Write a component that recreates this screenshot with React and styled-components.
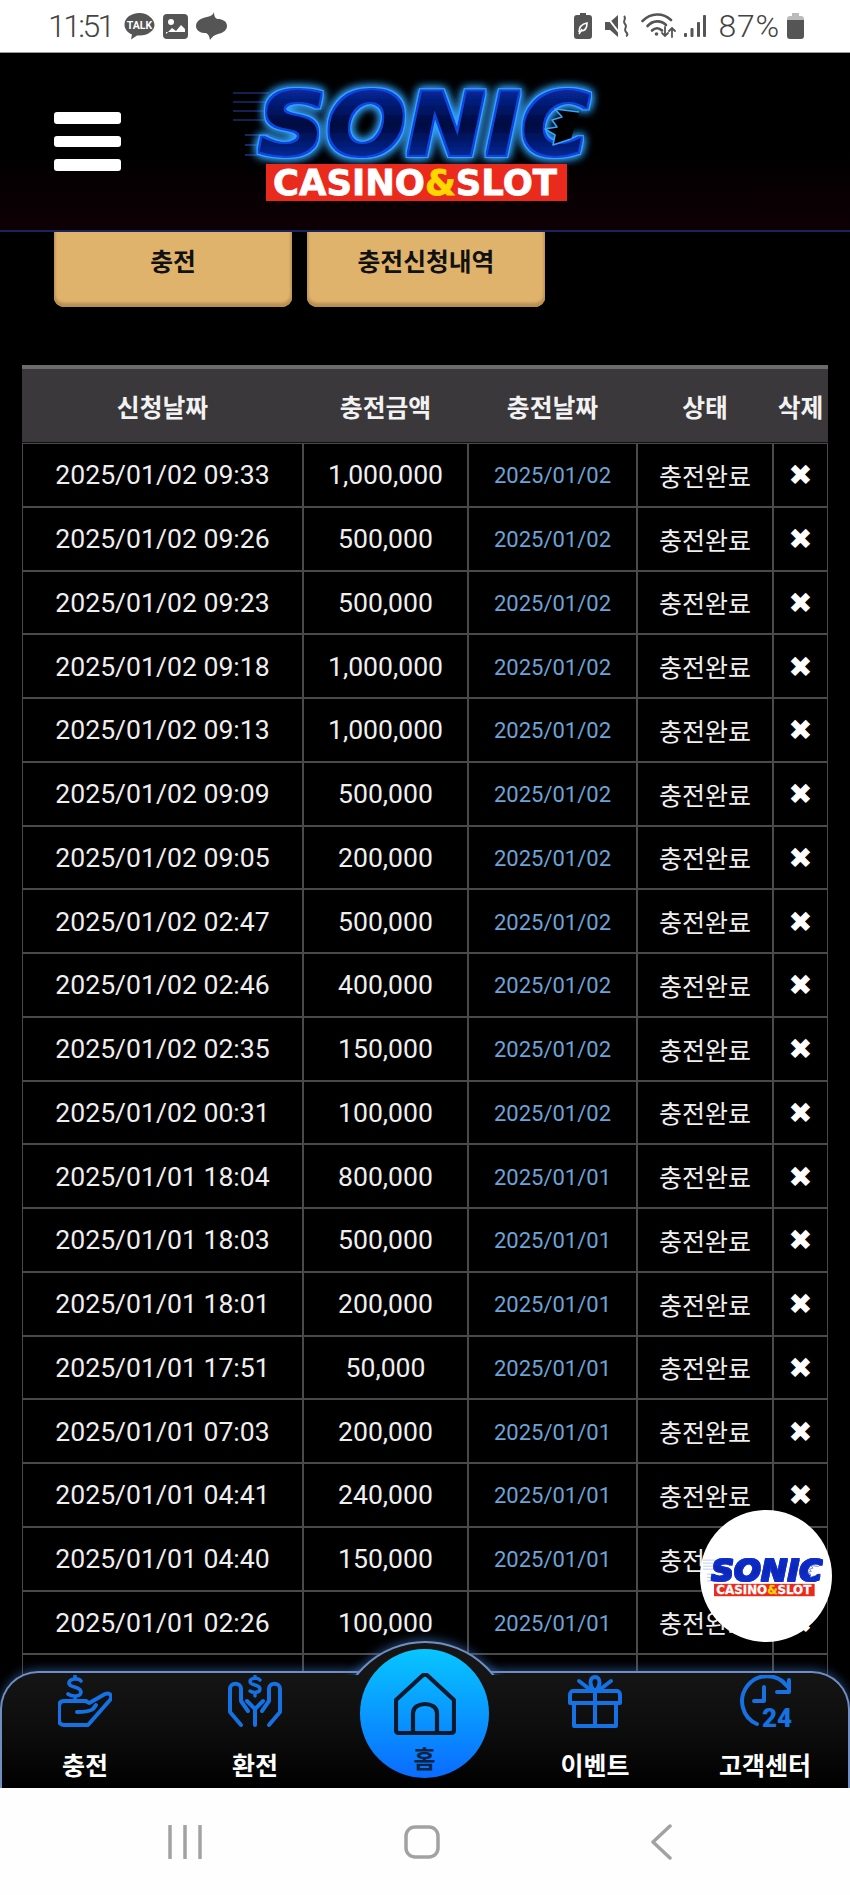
import React from 'react';
import styled, { createGlobalStyle } from 'styled-components';

const Global = createGlobalStyle`
  html, body { margin: 0; padding: 0; background: #000; }
  * { box-sizing: border-box; }
`;

const KR = `Roboto, "Noto Sans CJK KR", sans-serif`;

const Screen = styled.div`
  width: 850px; height: 1895px; display: flex; flex-direction: column;
  overflow: hidden; background: #000; font-family: ${KR};
`;

/* status bar */
const StatusBar = styled.div`
  height: 53px; flex: none; background: #fff; display: flex; align-items: center;
  justify-content: space-between; padding: 0 46px 0 48px;
  border-bottom: 1px solid #999;
`;
const StatusGroup = styled.div`
  display: flex; align-items: center; gap: ${p => p.$gap ?? 8}px;
`;
const StatusText = styled.span`
  font-family: Roboto, sans-serif; font-size: 32px; font-weight: 300; line-height: 1; color: #444;
  letter-spacing: ${p => p.$track}px;
  margin: 0 ${p => p.$after || 0}px 0 ${p => p.$before || 0}px;
`;
const StatusIcon = styled.svg`
  display: block; flex: none; margin-left: ${p => p.$before || 0}px;
`;

/* app */
const AppArea = styled.div`
  position: relative; flex: 1; min-height: 0; overflow: hidden; background: #000;
  display: flex; flex-direction: column;
`;
const Header = styled.header`
  flex: none; height: 179px; display: flex; align-items: flex-start;
  background: linear-gradient(#000 55%, #0e0005);
  border-bottom: 2px solid #17265c; position: relative; z-index: 2;
`;
const Burger = styled.div`
  margin: 59px 0 0 54px; width: 67px; display: flex; flex-direction: column; gap: 12px;
`;
const BurgerBar = styled.span`
  display: block; height: 11.5px; background: #fff; border-radius: 3px;
`;
const HeaderLogo = styled.div`
  margin: 34px 0 0 124px; width: 362px; height: 128px;
`;
const Actions = styled.div`
  flex: none; display: flex; gap: 15px; padding-left: 54px; margin-top: -2px;
`;
const ActionButton = styled.button`
  width: 238px; height: 77px; padding: 0 0 18px; border: 0; border-radius: 0 0 10px 10px;
  background: #e0b36d; color: #111; font: 700 24.8px ${KR};
  box-shadow: inset 0 -4px 3px #b98f4f, inset -2px 0 2px #c9a060, inset 2px 0 2px #c9a060;
`;

/* table */
const TableWrap = styled.div`
  flex: none; margin: 58px 0 0 22px; width: 806px;
`;
const Table = styled.table`
  width: 806px; table-layout: fixed; border-collapse: separate; border-spacing: 0;
`;
const Col = styled.col`
  width: ${p => p.$w}px;
`;
const HeadCell = styled.th`
  height: 78px; padding: 0; background: #3a383b; border-top: 4px solid #6b6b6b;
  border-bottom: 1px solid #111; color: #f2f2f2; font: 700 24.8px ${KR}; text-align: center;
`;
const Cell = styled.td`
  height: 63.75px; padding: ${p => p.$nudge || 0}px 0 0; border: 1.25px solid #4a4a4a; text-align: center;
  background: #000; white-space: nowrap; font: 400 ${p => p.$size || 26.6}px ${KR};
  color: ${p => p.$color || '#efefef'};
`;
const DeleteMark = styled.span`
  font-family: "DejaVu Sans", sans-serif; font-size: 29px; line-height: 1; color: #fff;
`;

/* floating badge */
const FloatBadge = styled.div`
  position: absolute; left: 700px; top: 1457px; width: 132px; height: 132px; border-radius: 50%;
  background: #fff; z-index: 3; padding: 48px 0 0 7px;
`;
const BadgeLogo = styled.div`
  width: 121px; height: 43px;
`;

/* bottom nav */
const BottomNav = styled.nav`
  position: absolute; left: 0; right: 0; bottom: 0; height: 117px; z-index: 4;
  display: grid; grid-template-columns: repeat(5, 170px); justify-content: center;
  background: linear-gradient(#151515, #0c0c0c 55%, #000);
  border: 2px solid #6f8fc4; border-bottom: 0; border-radius: 38px 38px 0 0;
  box-shadow: 0 -2px 10px rgba(70, 130, 220, .45);
`;
const BumpClip = styled.div`
  position: absolute; left: 50%; top: -52px; width: 240px; height: 54px; margin-left: -120px; overflow: hidden;
`;
const BumpArc = styled.div`
  position: absolute; left: 32px; top: 20px; width: 176px; height: 176px; border-radius: 50%;
  background: #151515; border: 2px solid #6f8fc4;
  box-shadow: 0 -2px 10px rgba(70, 130, 220, .5);
`;
const NavItem = styled.div`
  position: relative; display: flex; flex-direction: column; align-items: center; padding-top: 2px;
`;
const NavIcon = styled.svg`
  width: 54px; height: 54px; display: block; fill: none; stroke: #1671e3; stroke-width: 4;
  stroke-linecap: round; stroke-linejoin: round;
`;
const NavLabel = styled.span`
  margin-top: 22px; color: #fff; font: 700 25px/32px ${KR}; white-space: nowrap;
`;
const HomeButton = styled.div`
  position: absolute; left: 20px; top: -24px; width: 129px; height: 129px; border-radius: 50%;
  background: linear-gradient(#08c6ff, #0a6bff);
  display: flex; flex-direction: column; align-items: center; padding-top: 24px;
`;
const HomeIcon = styled.svg`
  width: 62px; height: 62px; display: block; fill: none; stroke: #0b1a2c; stroke-width: 4.2;
  stroke-linecap: round; stroke-linejoin: round;
`;
const HomeLabel = styled.span`
  margin-top: 13px; font: 700 24px/24px ${KR}; color: #0b2444;
`;

/* android nav */
const SystemNav = styled.div`
  flex: none; height: 107px; background: #fefefe; display: grid;
  grid-template-columns: 369px 106px 372px; align-items: center;
`;
const SystemSlot = styled.div`
  display: flex; justify-content: center;
`;
const SystemSvg = styled.svg`
  display: block; fill: none; stroke: #a2a2a2; stroke-width: 3.5; stroke-linecap: round; stroke-linejoin: round;
`;

/* logo */
const LogoSvg = styled.svg`
  display: block; width: 100%; height: 100%; overflow: visible;
`;
const SonicWord = styled.text`
  font: italic 700 88px "DejaVu Sans", sans-serif;
`;
const BannerWord = styled.text`
  font: 700 35.5px "DejaVu Sans", sans-serif; fill: #fff; stroke: #fff; stroke-width: .8px;
`;

function Logo({ id, glow }) {
  const edge = glow ? '#35a4ff' : '#0b2fd0';
  const body = glow ? '#0b46e0' : '#0b2fd0';
  return (
    <LogoSvg viewBox="0 0 362 128" aria-label="SONIC CASINO&SLOT">
      <defs>
        <linearGradient id={id} x1="0" y1="0" x2="0" y2="1">
          <stop offset="0" stopColor={glow ? '#0a36c4' : '#0a2fd0'} />
          <stop offset=".5" stopColor={glow ? '#02093f' : '#0826b4'} />
          <stop offset="1" stopColor={glow ? '#0a3ccc' : '#0a38d8'} />
        </linearGradient>
        <filter id={`${id}-fat`} x="-10%" y="-30%" width="120%" height="160%">
          <feMorphology in="SourceAlpha" operator="dilate" radius="3.2" result="outer" />
          <feMorphology in="SourceAlpha" operator="dilate" radius="2" result="inner" />
          <feFlood floodColor={edge} />
          <feComposite in2="outer" operator="in" result="edge" />
          <feFlood floodColor={body} />
          <feComposite in2="inner" operator="in" result="body" />
          <feGaussianBlur in="edge" stdDeviation={glow ? 5 : 0} result="glow" />
          <feMerge>
            {glow && <feMergeNode in="glow" />}
            {glow && <feMergeNode in="glow" />}
            <feMergeNode in="edge" />
            <feMergeNode in="body" />
            <feMergeNode in="SourceGraphic" />
          </feMerge>
        </filter>
      </defs>
      {[6, 15, 24, 33, 48, 58, 68].map((y, i) => (
        <line key={y} x1={i > 3 ? 0 : -12} x2="24" y1={y} y2={y} stroke={glow ? '#2b3fa8' : '#6a7fe0'} strokeWidth="1.2" />
      ))}
      <SonicWord
        x="13" y="68" textLength="332" lengthAdjust="spacingAndGlyphs"
        fill={`url(#${id})`} filter={`url(#${id}-fat)`}
      >SONIC</SonicWord>
      <polygon points="310,22 317,30 307,33 312,40 300,42 310,48 308,58 326,52 334,25" fill={glow ? '#000' : '#fff'} />
      <polyline points="334,25 310,22 317,30 307,33 312,40 300,42 310,48 308,58 326,52"
        fill="none" stroke={edge} strokeWidth="1.6" strokeLinejoin="round" />
      <rect x="21" y="77" width="301" height="37" fill="#ea2a1c" />
      <BannerWord x="28" y="108" textLength="284" lengthAdjust="spacingAndGlyphs">
        CASINO<tspan fill="#ffd800" stroke="#ffd800">&amp;</tspan>SLOT
      </BannerWord>
    </LogoSvg>
  );
}

const rows = [
  ['2025/01/02 09:33', '1,000,000', '2025/01/02'],
  ['2025/01/02 09:26', '500,000', '2025/01/02'],
  ['2025/01/02 09:23', '500,000', '2025/01/02'],
  ['2025/01/02 09:18', '1,000,000', '2025/01/02'],
  ['2025/01/02 09:13', '1,000,000', '2025/01/02'],
  ['2025/01/02 09:09', '500,000', '2025/01/02'],
  ['2025/01/02 09:05', '200,000', '2025/01/02'],
  ['2025/01/02 02:47', '500,000', '2025/01/02'],
  ['2025/01/02 02:46', '400,000', '2025/01/02'],
  ['2025/01/02 02:35', '150,000', '2025/01/02'],
  ['2025/01/02 00:31', '100,000', '2025/01/02'],
  ['2025/01/01 18:04', '800,000', '2025/01/01'],
  ['2025/01/01 18:03', '500,000', '2025/01/01'],
  ['2025/01/01 18:01', '200,000', '2025/01/01'],
  ['2025/01/01 17:51', '50,000', '2025/01/01'],
  ['2025/01/01 07:03', '200,000', '2025/01/01'],
  ['2025/01/01 04:41', '240,000', '2025/01/01'],
  ['2025/01/01 04:40', '150,000', '2025/01/01'],
  ['2025/01/01 02:26', '100,000', '2025/01/01'],
];

const grey = '#555';

const StatusLeftIcons = () => (
  <>
    <StatusIcon width="31" height="28" viewBox="0 0 31 28" $before={3}>
      <path d="M15.5 1C7 1 .5 6 .5 12.500c0 4.500 3 8 7.500 10l-1 5 6-4h2.500c8.500 0 15-5 15-10.500S24 1 15.500 1z" fill={grey} />
      <text x="15.500" y="17" textAnchor="middle" fontFamily="Roboto" fontWeight="700" fontSize="10.500" fill="#fff">TALK</text>
    </StatusIcon>
    <StatusIcon width="25" height="25" viewBox="0 0 25 25">
      <rect width="25" height="25" rx="4" fill={grey} />
      <circle cx="8" cy="8" r="3" fill="#fff" />
      <path d="M3 20l6-6 4 3 5-6 4 4v3H3z" fill="#fff" />
    </StatusIcon>
    <StatusIcon width="31" height="28" viewBox="0 0 31 28">
      <path d="M18 0c-1 3-3 4-7 5C5 6 0 9 0 14c0 4 4 7 8 7 2 0 5 0 6 7 2-3 4-5 8-6 5-1 9-4 9-8 0-5-5-7-9-7-2 0-4-2-4-7z" fill={grey} />
    </StatusIcon>
  </>
);

const StatusRightIcons = () => (
  <>
    <StatusIcon width="18" height="26" viewBox="0 0 18 26">
      <path d="M6 0h6v2h3a3 3 0 0 1 3 3v18a3 3 0 0 1-3 3H3a3 3 0 0 1-3-3V5a3 3 0 0 1 3-3h3z" fill={grey} />
      <path d="M5 19c0-5 3-8 8-9 0 5-2 8-6 8M5 21l3-5" stroke="#fff" strokeWidth="1.600" fill="none" />
    </StatusIcon>
    <StatusIcon width="24" height="24" viewBox="0 0 24 24" $before={13}>
      <path d="M0 8h5l8-7v22l-8-7H0z" fill={grey} />
      <path d="M2 3l14 18" stroke="#fff" strokeWidth="2" />
      <path d="M19 2c3 3-2 5 1 8s-2 5 1 8 0 4 0 4" stroke={grey} strokeWidth="2" fill="none" />
    </StatusIcon>
    <StatusIcon width="35" height="26" viewBox="0 0 35 26" $before={12}>
      <g fill="none" stroke={grey} strokeWidth="2.600" strokeLinecap="round">
        <path d="M1.500 8C10-.5 22-.5 30 7" />
        <path d="M6.500 13C12 7 20 7 25 12" />
        <path d="M11 17.500c3-3 7-3 10 0" />
        <path d="M24 14v9M21 20l3 3 3-3" strokeWidth="1.800" />
        <path d="M31 24v-9M28 18l3-3 3 3" strokeWidth="1.800" />
      </g>
      <circle cx="15.500" cy="21" r="1.800" fill={grey} />
    </StatusIcon>
    <StatusIcon width="22" height="24" viewBox="0 0 22 24" $before={8}>
      <rect x="0" y="19" width="3" height="4" rx="1" fill={grey} />
      <rect x="6.500" y="14" width="3" height="9" rx="1" fill={grey} />
      <rect x="13" y="8" width="3" height="15" rx="1" fill={grey} />
      <rect x="19" y="1" width="3" height="22" rx="1" fill={grey} />
    </StatusIcon>
    <StatusText $track={0.8} $before={12}>87%</StatusText>
    <StatusIcon width="17" height="26" viewBox="0 0 17 26" $before={7}>
      <path d="M5 0h7v3h2a3 3 0 0 1 3 3v1H0V6a3 3 0 0 1 3-3h2z" fill="#bbb" />
      <path d="M0 7h17v16a3 3 0 0 1-3 3H3a3 3 0 0 1-3-3z" fill={grey} />
    </StatusIcon>
  </>
);

const IconCharge = () => (
  <NavIcon viewBox="0 0 54 54">
    <path d="M23 6c-2-3-11-3-12 1.500C10 13 23 11 23 17c0 5-9 5-13 2M17 1v2.500M17 21v3" strokeWidth="3.600" />
    <path d="M1 32c0-4 2-6 5-6h22c3 2 3 3 5 1l14-8c5-2 8 2 5 6L30 50H6c-3 0-5-2-5-5z" />
    <path d="M19 37c6 0 12 0 16-3l3-4" />
  </NavIcon>
);
const IconExchange = () => (
  <NavIcon viewBox="0 0 54 54">
    <path d="M32 5c-2-3-10-2-10 1.500C22 11 32 9 32 14c0 4-7 4-10 2M27 1v2M27 18v3" strokeWidth="3.400" />
    <path d="M2 14V37L13 50M2 14c0-7 11-7 11 0V26L20 36M27 50V34L19 26" />
    <path d="M52 14V37L41 50M52 14c0-7-11-7-11 0V26L34 36M27 34L35 26" />
  </NavIcon>
);
const IconGift = () => (
  <NavIcon viewBox="0 0 54 54">
    <path d="M2 28V20c0-2 1-4 3-4h44c2 0 3 2 3 4v8zM6 29v22h42V29M27 16v35" />
    <path d="M27 16c-6-5-6-14 0-14s6 9 0 14zM24 16L11 6M30 16L43 6" />
  </NavIcon>
);
const IconSupport = () => (
  <NavIcon viewBox="0 0 54 54">
    <path d="M49 11A25 25 0 1 0 19 49" />
    <path d="M51 5V17H39" />
    <path d="M26 12V26H16" />
    <text x="24" y="52" fontFamily="Roboto" fontWeight="900" fontSize="26" fill="#1671e3" stroke="none" textLength="30">24</text>
  </NavIcon>
);
const IconHome = () => (
  <HomeIcon viewBox="0 0 62 62">
    <path d="M28 3c2-2 4-2 6 0l26 24v30c0 2-1 3-3 3H5c-2 0-3-1-3-3V27z" />
    <path d="M19 60V40c0-12 24-12 24 0v20" />
  </HomeIcon>
);

export default function App() {
  return (
    <Screen>
      <Global />
      <StatusBar>
        <StatusGroup>
          <StatusText $track={-2.6}>11:51</StatusText>
          <StatusLeftIcons />
        </StatusGroup>
        <StatusGroup $gap={0}>
          <StatusRightIcons />
        </StatusGroup>
      </StatusBar>

      <AppArea>
        <Header>
          <Burger>
            <BurgerBar /><BurgerBar /><BurgerBar />
          </Burger>
          <HeaderLogo><Logo id="sonicMain" glow /></HeaderLogo>
        </Header>
        <Actions>
          <ActionButton>충전</ActionButton>
          <ActionButton>충전신청내역</ActionButton>
        </Actions>
        <TableWrap>
          <Table>
            <colgroup>
              <Col $w={281} /><Col $w={165} /><Col $w={169} /><Col $w={136} /><Col $w={55} />
            </colgroup>
            <thead>
              <tr>
                <HeadCell>신청날짜</HeadCell>
                <HeadCell>충전금액</HeadCell>
                <HeadCell>충전날짜</HeadCell>
                <HeadCell>상태</HeadCell>
                <HeadCell>삭제</HeadCell>
              </tr>
            </thead>
            <tbody>
              {rows.map((r, i) => (
                <tr key={i}>
                  <Cell>{r[0]}</Cell>
                  <Cell>{r[1]}</Cell>
                  <Cell $size={22} $color="#6ba4d8" $nudge={2}>{r[2]}</Cell>
                  <Cell $size={25}>충전완료</Cell>
                  <Cell $nudge={2}><DeleteMark>✖</DeleteMark></Cell>
                </tr>
              ))}
              <tr>
                <Cell /><Cell /><Cell /><Cell /><Cell />
              </tr>
            </tbody>
          </Table>
        </TableWrap>

        <FloatBadge>
          <BadgeLogo><Logo id="sonicBadge" /></BadgeLogo>
        </FloatBadge>

        <BottomNav>
          <BumpClip><BumpArc /></BumpClip>
          <NavItem><IconCharge /><NavLabel>충전</NavLabel></NavItem>
          <NavItem><IconExchange /><NavLabel>환전</NavLabel></NavItem>
          <NavItem>
            <HomeButton>
              <IconHome />
              <HomeLabel>홈</HomeLabel>
            </HomeButton>
          </NavItem>
          <NavItem><IconGift /><NavLabel>이벤트</NavLabel></NavItem>
          <NavItem><IconSupport /><NavLabel>고객센터</NavLabel></NavItem>
        </BottomNav>
      </AppArea>

      <SystemNav>
        <SystemSlot>
          <SystemSvg width="36" height="34" viewBox="0 0 36 34">
            <path d="M3 1v32M18 1v32M33 1v32" />
          </SystemSvg>
        </SystemSlot>
        <SystemSlot>
          <SystemSvg width="36" height="34" viewBox="0 0 36 34">
            <rect x="2" y="2" width="32" height="30" rx="9" />
          </SystemSvg>
        </SystemSlot>
        <SystemSlot>
          <SystemSvg width="22" height="36" viewBox="0 0 22 36">
            <path d="M20 2L3 18l17 16" />
          </SystemSvg>
        </SystemSlot>
      </SystemNav>
    </Screen>
  );
}
